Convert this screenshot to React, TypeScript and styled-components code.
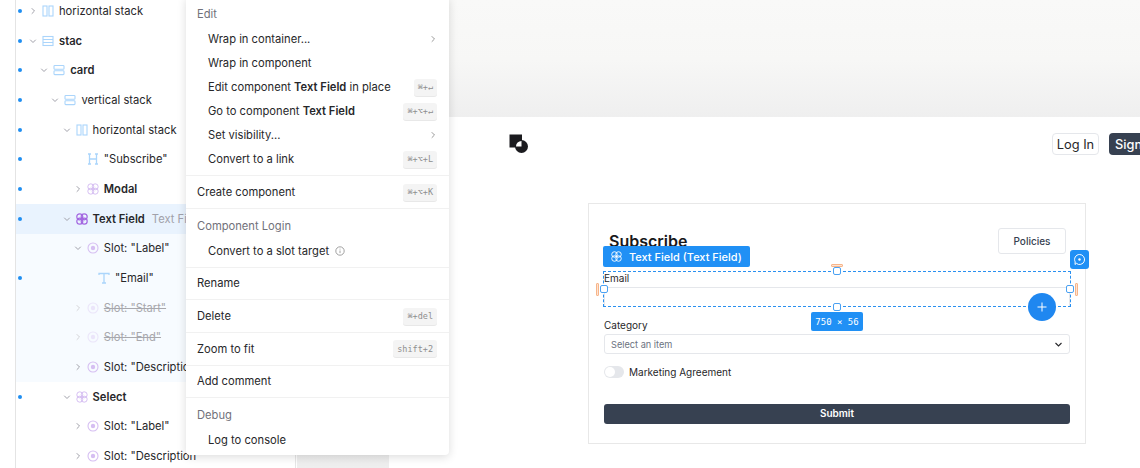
import React from "react";
import styled, { createGlobalStyle } from "styled-components";

const Global = createGlobalStyle`
  html, body { margin: 0; padding: 0; width: 1140px; height: 468px; overflow: hidden; background: #fff; }
  body { font-family: Inter, "Liberation Sans", sans-serif; -webkit-font-smoothing: antialiased; }
  #root { width: 1140px; height: 468px; }
  * { box-sizing: border-box; }
`;

const Shell = styled.div`
  position: relative;
  display: flex;
  width: 1140px;
  height: 468px;
  overflow: hidden;
`;

/* ---------- outline tree ---------- */
const Sidebar = styled.aside`
  flex: 0 0 281px;
  height: 468px;
  margin-left: 15px;
  border-left: 1px solid #e4e4e4;
  border-right: 1px solid #e6e6e6;
  overflow: hidden;
`;
const Tree = styled.div`
  margin-top: -4px;
`;
const Row = styled.div<{ $tone?: "selected" | "soft" }>`
  display: flex;
  align-items: center;
  height: 29.7px;
  padding-left: 2px;
  white-space: nowrap;
  font-size: 11.2px;
  color: #27272a;
  background: ${(p) => (p.$tone === "selected" ? "#e9f3fe" : p.$tone === "soft" ? "#f7fbff" : "transparent")};
`;
const Dot = styled.span<{ $on: boolean }>`
  flex: 0 0 4px;
  width: 4px;
  height: 4px;
  border-radius: 50%;
  background: ${(p) => (p.$on ? "#1f8ef1" : "transparent")};
`;
const Indent = styled.span<{ $level: number }>`
  flex: 0 0 ${(p) => 5 + p.$level * 11.2}px;
`;
const Twist = styled.span<{ $faded?: boolean }>`
  flex: 0 0 12px;
  display: flex;
  align-items: center;
  justify-content: center;
  color: ${(p) => (p.$faded ? "#d4d4d8" : "#a1a1aa")};
`;
const NodeIcon = styled.span<{ $faded?: boolean }>`
  flex: 0 0 16px;
  display: flex;
  align-items: center;
  justify-content: center;
  opacity: ${(p) => (p.$faded ? 0.35 : 1)};
  margin-left: 1px;
`;
const NodeName = styled.span<{ $bold?: boolean; $faded?: boolean }>`
  margin-left: 3px;
  font-weight: ${(p) => (p.$bold ? 600 : 400)};
  color: ${(p) => (p.$faded ? "#a8a8ad" : "#27272a")};
  text-decoration: ${(p) => (p.$faded ? "line-through" : "none")};
`;
const NodeHint = styled.span`
  margin-left: 7px;
  color: #a1a1aa;
`;

const Chevron = ({ open }: { open: boolean }) => (
  <svg width="8" height="8" viewBox="0 0 8 8" fill="none" stroke="currentColor" strokeWidth="1" strokeLinecap="round" strokeLinejoin="round">
    {open ? <path d="M1.5 3 4 5.5 6.5 3" /> : <path d="M3 1.5 5.5 4 3 6.5" />}
  </svg>
);
const BLUE = "#abd5fb";
const PURPLE = "#d6bff2";

const Lattice = ({ color, size = 12, width = 1 }: { color: string; size?: number; width?: number }) => (
  <svg width={size} height={size} viewBox="0 0 12 12" fill="none" stroke={color} strokeWidth={width}>
    <circle cx="3.8" cy="3.8" r="3" />
    <circle cx="8.2" cy="3.8" r="3" />
    <circle cx="3.8" cy="8.2" r="3" />
    <circle cx="8.2" cy="8.2" r="3" />
  </svg>
);

type Kind = "h" | "stack" | "v" | "head" | "text" | "comp" | "compStrong" | "slot";
const Glyph = ({ kind }: { kind: Kind }) => {
  const s = { width: 12, height: 12, viewBox: "0 0 12 12", fill: "none", strokeWidth: 1.1 } as const;
  switch (kind) {
    case "h":
      return (
        <svg {...s} stroke={BLUE}>
          <rect x="1" y="1" width="4" height="10" />
          <rect x="7" y="1" width="4" height="10" />
        </svg>
      );
    case "stack":
      return (
        <svg {...s} stroke={BLUE}>
          <rect x="1" y="1.5" width="10" height="9" />
          <path d="M1 4.5h10M1 7.5h10" />
        </svg>
      );
    case "v":
      return (
        <svg {...s} stroke={BLUE}>
          <rect x="1" y="1.5" width="10" height="3.8" rx=".8" />
          <rect x="1" y="6.8" width="10" height="3.8" rx=".8" />
        </svg>
      );
    case "head":
      return (
        <svg {...s} stroke={BLUE} strokeWidth={1.3}>
          <path d="M2.5 1v10M9.5 1v10M2.5 6h7M1 1h3M8 1h3M1 11h3M8 11h3" />
        </svg>
      );
    case "text":
      return (
        <svg {...s} stroke={BLUE} strokeWidth={1.3}>
          <path d="M1 3V1.5h10V3M6 1.5V11M4 11h4" />
        </svg>
      );
    case "comp":
      return <Lattice color={PURPLE} />;
    case "compStrong":
      return <Lattice color="#a265e0" width={1.2} />;
    default:
      return (
        <svg {...s} stroke={PURPLE}>
          <circle cx="6" cy="6" r="5" />
          <circle cx="6" cy="6" r="2.2" fill={PURPLE} stroke="none" />
        </svg>
      );
  }
};

type TreeItem = {
  level: number;
  icon: Kind;
  name: string;
  twist?: "open" | "closed";
  dot?: boolean;
  bold?: boolean;
  faded?: boolean;
  hint?: string;
  tone?: "selected" | "soft";
};
const treeItems: TreeItem[] = [
  { level: 0, twist: "closed", icon: "h", name: "horizontal stack", dot: true },
  { level: 0, twist: "open", icon: "stack", name: "stac", dot: true, bold: true },
  { level: 1, twist: "open", icon: "v", name: "card", dot: true, bold: true },
  { level: 2, twist: "open", icon: "v", name: "vertical stack", dot: true },
  { level: 3, twist: "open", icon: "h", name: "horizontal stack", dot: true },
  { level: 4, icon: "head", name: '"Subscribe"', dot: true },
  { level: 4, twist: "closed", icon: "comp", name: "Modal", dot: true, bold: true },
  { level: 3, twist: "open", icon: "compStrong", name: "Text Field", dot: true, bold: true, hint: "Text Field", tone: "selected" },
  { level: 4, twist: "open", icon: "slot", name: 'Slot: "Label"', tone: "soft" },
  { level: 5, icon: "text", name: '"Email"', dot: true, tone: "soft" },
  { level: 4, twist: "closed", icon: "slot", name: 'Slot: "Start"', faded: true, tone: "soft" },
  { level: 4, twist: "closed", icon: "slot", name: 'Slot: "End"', faded: true, tone: "soft" },
  { level: 4, twist: "closed", icon: "slot", name: 'Slot: "Description"', tone: "soft" },
  { level: 3, twist: "open", icon: "comp", name: "Select", dot: true, bold: true },
  { level: 4, twist: "closed", icon: "slot", name: 'Slot: "Label"' },
  { level: 4, twist: "closed", icon: "slot", name: 'Slot: "Description"' },
];

/* ---------- canvas ---------- */
const Canvas = styled.main`
  flex: 1;
  min-width: 0;
  height: 468px;
  margin-left: 1px;
  padding: 117px 0 0 92px;
  background: linear-gradient(#f9f9f8 0, #f7f7f6 60px, #efefef 117px, #f4f4f4 117px, #eeeeee 468px);
  overflow: hidden;
`;
const Frame = styled.div`
  width: 751px;
  height: 351px;
  background: #fff;
  overflow: hidden;
`;
const SiteHeader = styled.header`
  display: flex;
  align-items: flex-start;
  height: 86px;
  padding: 16px 0 0 120px;
`;
const Nav = styled.nav`
  display: flex;
  gap: 10px;
  margin-left: auto;
  margin-right: -29px;
`;
const LogIn = styled.div`
  display: flex;
  align-items: center;
  justify-content: center;
  width: 47px;
  height: 22px;
  border: 1px solid #e5e7eb;
  border-radius: 4px;
  font-size: 12.8px;
  color: #27272a;
`;
const SignUp = styled(LogIn)`
  width: 60px;
  border: none;
  justify-content: flex-start;
  padding-left: 6px;
  background: #374151;
  color: #fff;
  font-weight: 500;
`;
const Card = styled.section`
  width: 498px;
  height: 241px;
  margin-left: 199px;
  padding: 24px 15px 0;
  border: 1px solid #e8e8e8;
`;
const CardHead = styled.div`
  display: flex;
  align-items: center;
  justify-content: space-between;
  height: 26px;
  padding: 0 4px 0 5px;
`;
const Title = styled.h2`
  position: relative;
  margin: 0;
  font-size: 16px;
  line-height: 22px;
  font-weight: 600;
  color: #18181b;
  &::after {
    content: "";
    position: absolute;
    left: 0;
    top: 20px;
    width: 49px;
    height: 1px;
    background: #2a6fb8;
  }
`;
const Policies = styled.div`
  display: flex;
  align-items: center;
  justify-content: center;
  width: 68px;
  height: 26px;
  border: 1px solid #e5e7eb;
  border-radius: 3px;
  font-size: 10px;
  font-weight: 500;
  color: #374151;
`;
const Field = styled.div`
  position: relative;
  height: 36px;
  margin-top: 17px;
`;
const Label = styled.div`
  height: 16px;
  font-size: 10px;
  line-height: 15px;
  color: #27272a;
`;
const Input = styled.div`
  height: 20px;
  border: 1px solid #e5e7eb;
  border-bottom: none;
  border-radius: 3px 3px 0 0;
`;
const SelectField = styled.div`
  margin-top: 11px;
`;
const SelectBox = styled.div`
  display: flex;
  align-items: center;
  justify-content: space-between;
  height: 20px;
  padding: 0 6px;
  border: 1px solid #e5e7eb;
  border-radius: 3px;
  font-size: 9.2px;
  color: #6b7280;
`;
const ToggleRow = styled.div`
  display: flex;
  align-items: center;
  gap: 5px;
  margin-top: 12px;
  height: 12px;
  font-size: 10px;
  color: #27272a;
`;
const Toggle = styled.span`
  display: block;
  width: 20px;
  height: 12px;
  padding: 1px;
  border-radius: 6px;
  background: #e5e7eb;
  &::before {
    content: "";
    display: block;
    width: 10px;
    height: 10px;
    border-radius: 50%;
    background: #fff;
  }
`;
const Submit = styled.div`
  display: flex;
  align-items: center;
  justify-content: center;
  height: 20px;
  margin-top: 26px;
  padding-bottom: 2px;
  border-radius: 3px;
  background: #374151;
  color: #fff;
  font-size: 10px;
  font-weight: 600;
`;

/* ---------- selection overlay ---------- */
const Selection = styled.div`
  position: absolute;
  inset: 0 -0.5px 0 -1px;
  border: 1px dashed #2a90f0;
`;
const Tag = styled.div`
  position: absolute;
  left: -1px;
  top: -25px;
  display: flex;
  align-items: center;
  gap: 7px;
  height: 21px;
  padding: 0 8px;
  border-radius: 2px;
  background: #2090f5;
  color: #fff;
  font-size: 11px;
  font-weight: 500;
  white-space: nowrap;
`;
const Handle = styled.span<{ $x: string; $y: string }>`
  position: absolute;
  left: ${(p) => p.$x};
  top: ${(p) => p.$y};
  width: 8px;
  height: 8px;
  margin: -4px 0 0 -4px;
  border: 1px solid #4aa1f3;
  border-radius: 2px;
  background: #fff;
`;
const Pin = styled.span<{ $x: string; $y: string; $w: number; $h: number }>`
  position: absolute;
  left: ${(p) => p.$x};
  top: ${(p) => p.$y};
  width: ${(p) => p.$w}px;
  height: ${(p) => p.$h}px;
  margin: ${(p) => -p.$h / 2}px 0 0 ${(p) => -p.$w / 2}px;
  border: 1px solid #f7b58a;
  background: #fde3d2;
  border-radius: 1px;
`;
const SizeTag = styled.div`
  position: absolute;
  left: 50%;
  top: 41px;
  margin-left: -26px;
  display: flex;
  align-items: center;
  justify-content: center;
  width: 52px;
  height: 19px;
  border-radius: 2px;
  background: #2090f5;
  color: #fff;
  font-family: "DejaVu Sans Mono", monospace;
  font-size: 9px;
  white-space: nowrap;
`;
const AddButton = styled.div`
  position: absolute;
  right: 14px;
  top: 22px;
  display: flex;
  align-items: center;
  justify-content: center;
  width: 28px;
  height: 28px;
  border-radius: 50%;
  background: #1f87f0;
  color: #fff;
`;
const CommentButton = styled.div`
  position: absolute;
  right: -19px;
  top: -21px;
  display: flex;
  align-items: center;
  justify-content: center;
  width: 19px;
  height: 19px;
  border-radius: 3px;
  background: #2090f5;
`;

/* ---------- context menu ---------- */
const Menu = styled.div`
  position: absolute;
  left: 186px;
  top: -3px;
  width: 263px;
  background: #fff;
  border-radius: 0 0 4px 4px;
  box-shadow: 0 2px 10px rgba(0, 0, 0, 0.14);
  font-size: 11.2px;
  color: #27272a;
`;
const MenuSection = styled.div`
  padding: 3.8px 0;
  border-bottom: 1px solid #f1f1f1;
  &:last-child {
    border-bottom: none;
    padding-bottom: 3px;
  }
`;
const MenuHeader = styled.div`
  display: flex;
  align-items: center;
  height: 26px;
  padding: 0 12px 0 11px;
  color: #71717a;
`;
const MenuItem = styled.div<{ $inset?: boolean }>`
  display: flex;
  align-items: center;
  height: 24.1px;
  padding: 0 12px 0 ${(p) => (p.$inset ? 22 : 11)}px;
  white-space: nowrap;
  b {
    font-weight: 600;
    white-space: pre;
  }
`;
const MenuText = styled.span`
  flex: 1;
  display: flex;
  align-items: center;
  white-space: pre;
`;
const Kbd = styled.kbd`
  display: flex;
  align-items: center;
  height: 17px;
  padding: 0 4px;
  border-radius: 3px;
  background: #f4f4f4;
  box-shadow: 0 1px 0 #e8e8e8;
  color: #8f8f8f;
  font-family: "DejaVu Sans Mono", monospace;
  font-size: 8.5px;
`;
const InfoIcon = styled.span`
  display: inline-flex;
  margin-left: 6px;
  color: #8a8a8a;
`;
const SubArrow = styled.span`
  display: flex;
  color: #9a9a9a;
`;

export default function App() {
  return (
    <Shell>
      <Global />
      <Sidebar>
        <Tree>
          {treeItems.map((t, i) => (
            <Row key={i} $tone={t.tone}>
              <Dot $on={!!t.dot} />
              <Indent $level={t.level} />
              <Twist $faded={t.faded}>{t.twist && <Chevron open={t.twist === "open"} />}</Twist>
              <NodeIcon $faded={t.faded}>
                <Glyph kind={t.icon} />
              </NodeIcon>
              <NodeName $bold={t.bold} $faded={t.faded}>
                {t.name}
              </NodeName>
              {t.hint && <NodeHint>{t.hint}</NodeHint>}
            </Row>
          ))}
        </Tree>
      </Sidebar>

      <Canvas>
        <Frame>
          <SiteHeader>
            <svg width="20" height="21" viewBox="0 0 20 21">
              <rect x=".5" y="1.5" width="12.5" height="13" fill="#1b1b1f" />
              <circle cx="12.5" cy="13.5" r="6.5" fill="#1b1b1f" />
              <path d="M12.5 8a5.5 5.5 0 0 0-5.5 5.5h5.5Z" fill="#fff" />
            </svg>
            <Nav>
              <LogIn>Log In</LogIn>
              <SignUp>Sign Up</SignUp>
            </Nav>
          </SiteHeader>
          <Card>
            <CardHead>
              <Title>Subscribe</Title>
              <Policies>Policies</Policies>
            </CardHead>
            <Field>
              <Label>Email</Label>
              <Input />
              <Selection />
              <Tag>
                <Lattice color="#fff" size={11} />
                Text Field (Text Field)
              </Tag>
              <Pin $x="50%" $y="-6px" $w={12} $h={3} />
              <Pin $x="50%" $y="42px" $w={12} $h={3} />
              <Pin $x="-7px" $y="18px" $w={3} $h={13} />
              <Pin $x="calc(100% + 6px)" $y="18px" $w={3} $h={13} />
              <Handle $x="50%" $y="0" />
              <Handle $x="50%" $y="100%" />
              <Handle $x="0" $y="18px" />
              <Handle $x="100%" $y="18px" />
              <SizeTag>750 × 56</SizeTag>
              <AddButton>
                <svg width="10" height="10" viewBox="0 0 10 10" stroke="#fff" strokeWidth="1">
                  <path d="M5 .5v9M.5 5h9" />
                </svg>
              </AddButton>
              <CommentButton>
                <svg width="13" height="13" viewBox="0 0 13 13" fill="none" stroke="#fff" strokeWidth="1">
                  <path d="M6.5 1.5a5 5 0 1 1-3.2 8.8L2 11.5l.2-2.6A5 5 0 0 1 6.5 1.5Z" />
                  <circle cx="6.5" cy="6.5" r="1.2" fill="#fff" stroke="none" />
                </svg>
              </CommentButton>
            </Field>
            <SelectField>
              <Label>Category</Label>
              <SelectBox>
                Select an item
                <svg width="9" height="9" viewBox="0 0 9 9" fill="none" stroke="#27272a" strokeWidth="1.1">
                  <path d="M1.5 3 4.5 6 7.5 3" />
                </svg>
              </SelectBox>
            </SelectField>
            <ToggleRow>
              <Toggle />
              Marketing Agreement
            </ToggleRow>
            <Submit>Submit</Submit>
          </Card>
        </Frame>
      </Canvas>

      <Menu>
        <MenuSection>
          <MenuHeader>Edit</MenuHeader>
          <MenuItem $inset>
            <MenuText>Wrap in container...</MenuText>
            <SubArrow>
              <Chevron open={false} />
            </SubArrow>
          </MenuItem>
          <MenuItem $inset>
            <MenuText>Wrap in component</MenuText>
          </MenuItem>
          <MenuItem $inset>
            <MenuText>
              Edit component <b>Text Field</b> in place
            </MenuText>
            <Kbd>⌘+↵</Kbd>
          </MenuItem>
          <MenuItem $inset>
            <MenuText>
              Go to component <b>Text Field</b>
            </MenuText>
            <Kbd>⌘+⌥+↵</Kbd>
          </MenuItem>
          <MenuItem $inset>
            <MenuText>Set visibility...</MenuText>
            <SubArrow>
              <Chevron open={false} />
            </SubArrow>
          </MenuItem>
          <MenuItem $inset>
            <MenuText>Convert to a link</MenuText>
            <Kbd>⌘+⌥+L</Kbd>
          </MenuItem>
        </MenuSection>
        <MenuSection>
          <MenuItem>
            <MenuText>Create component</MenuText>
            <Kbd>⌘+⌥+K</Kbd>
          </MenuItem>
        </MenuSection>
        <MenuSection>
          <MenuHeader>Component Login</MenuHeader>
          <MenuItem $inset>
            <MenuText>
              Convert to a slot target
              <InfoIcon>
                <svg width="10" height="10" viewBox="0 0 10 10" fill="none" stroke="currentColor" strokeWidth=".8">
                  <circle cx="5" cy="5" r="4.2" />
                  <path d="M5 4.5v2.6M5 2.7v.8" />
                </svg>
              </InfoIcon>
            </MenuText>
          </MenuItem>
        </MenuSection>
        <MenuSection>
          <MenuItem>
            <MenuText>Rename</MenuText>
          </MenuItem>
        </MenuSection>
        <MenuSection>
          <MenuItem>
            <MenuText>Delete</MenuText>
            <Kbd>⌘+del</Kbd>
          </MenuItem>
        </MenuSection>
        <MenuSection>
          <MenuItem>
            <MenuText>Zoom to fit</MenuText>
            <Kbd>shift+2</Kbd>
          </MenuItem>
        </MenuSection>
        <MenuSection>
          <MenuItem>
            <MenuText>Add comment</MenuText>
          </MenuItem>
        </MenuSection>
        <MenuSection>
          <MenuHeader>Debug</MenuHeader>
          <MenuItem $inset>
            <MenuText>Log to console</MenuText>
          </MenuItem>
        </MenuSection>
      </Menu>
    </Shell>
  );
}
